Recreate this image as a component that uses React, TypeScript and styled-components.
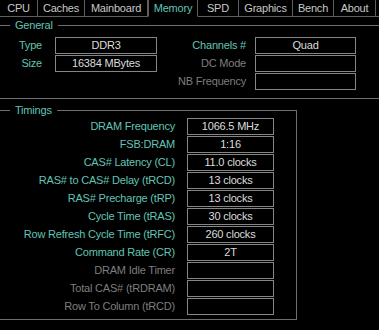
import React from 'react'
import styled, { createGlobalStyle } from 'styled-components'

const GlobalStyle = createGlobalStyle`
  html, body {
    margin: 0;
    padding: 0;
    background: #000;
  }
  body {
    font-family: "Liberation Sans", Arial, sans-serif;
  }
`

const TEAL = '#62c4b6'
const DIM = '#7e7e7e'

const Window = styled.div`
  width: 379px;
  height: 330px;
  background: #000;
  overflow: hidden;
  font-size: 11px;
  letter-spacing: -0.2px;
`

const TabBar = styled.div`
  display: flex;
  height: 17px;
`

const Tab = styled.div<{ $w: number; $active?: boolean }>`
  flex: none;
  width: ${(p) => p.$w}px;
  box-sizing: border-box;
  display: flex;
  align-items: center;
  justify-content: center;
  border-right: 1px solid #5e5e5e;
  border-left: ${(p) => (p.$active ? '1px solid #5e5e5e' : 'none')};
  border-bottom: ${(p) => (p.$active ? '1px solid #000' : '1px solid #5e5e5e')};
  color: ${(p) => (p.$active ? TEAL : '#c8c8c8')};
`

const TabFill = styled.div`
  flex: 1;
  border-bottom: 1px solid #5e5e5e;
`

const Group = styled.fieldset<{ $width?: number; $top: number; $right?: boolean }>`
  box-sizing: border-box;
  width: ${(p) => (p.$width ? `${p.$width}px` : '100%')};
  margin: ${(p) => p.$top}px 0 0;
  padding: 0;
  min-width: 0;
  border: 1px solid #6e6e6e;
  border-left: none;
  border-right: ${(p) => (p.$right ? '1px solid #6e6e6e' : 'none')};
`

const Legend = styled.legend`
  margin-left: 10px;
  padding: 0 5px;
  line-height: 13px;
  color: ${TEAL};
`

const GeneralBody = styled.div`
  display: flex;
  padding: 5px 0 8px;
`

const FieldGrid = styled.div<{ $label: number; $box: number; $gap: number }>`
  display: grid;
  grid-template-columns: ${(p) => p.$label}px ${(p) => p.$box}px;
  column-gap: ${(p) => p.$gap}px;
  row-gap: 1px;
  grid-auto-rows: 17px;
  align-content: start;
`

const Label = styled.div<{ $dim?: boolean }>`
  text-align: right;
  line-height: 17px;
  white-space: nowrap;
  color: ${(p) => (p.$dim ? DIM : TEAL)};
`

const Value = styled.div`
  box-sizing: border-box;
  height: 17px;
  border: 1px solid #858585;
  line-height: 15px;
  text-align: center;
  white-space: nowrap;
  color: #dcdcdc;
`

const TimingsBody = styled.div`
  padding: 1px 0 4px;
`

const tabs = [
  { name: 'CPU', w: 38 },
  { name: 'Caches', w: 47 },
  { name: 'Mainboard', w: 63 },
  { name: 'Memory', w: 50, active: true },
  { name: 'SPD', w: 41 },
  { name: 'Graphics', w: 54 },
  { name: 'Bench', w: 41 },
  { name: 'About', w: 42 },
]

const timings: { label: string; value: string; dim?: boolean }[] = [
  { label: 'DRAM Frequency', value: '1066.5 MHz' },
  { label: 'FSB:DRAM', value: '1:16' },
  { label: 'CAS# Latency (CL)', value: '11.0 clocks' },
  { label: 'RAS# to CAS# Delay (tRCD)', value: '13 clocks' },
  { label: 'RAS# Precharge (tRP)', value: '13 clocks' },
  { label: 'Cycle Time (tRAS)', value: '30 clocks' },
  { label: 'Row Refresh Cycle Time (tRFC)', value: '260 clocks' },
  { label: 'Command Rate (CR)', value: '2T' },
  { label: 'DRAM Idle Timer', value: '', dim: true },
  { label: 'Total CAS# (tRDRAM)', value: '', dim: true },
  { label: 'Row To Column (tRCD)', value: '', dim: true },
]

const App: React.FC = () => {
  return (
    <Window>
      <GlobalStyle />
      <TabBar>
        {tabs.map((t) => (
          <Tab key={t.name} $w={t.w} $active={t.active}>
            {t.name}
          </Tab>
        ))}
        <TabFill />
      </TabBar>

      <Group $top={2}>
        <Legend>General</Legend>
        <GeneralBody>
          <FieldGrid $label={42} $box={102} $gap={13}>
            <Label>Type</Label>
            <Value>DDR3</Value>
            <Label>Size</Label>
            <Value>16384 MBytes</Value>
          </FieldGrid>
          <FieldGrid $label={89} $box={101} $gap={9}>
            <Label>Channels #</Label>
            <Value>Quad</Value>
            <Label $dim>DC Mode</Label>
            <Value />
            <Label $dim>NB Frequency</Label>
            <Value />
          </FieldGrid>
        </GeneralBody>
      </Group>

      <Group $top={5} $width={297} $right>
        <Legend>Timings</Legend>
        <TimingsBody>
          <FieldGrid $label={175} $box={87} $gap={12}>
            {timings.map((t) => (
              <React.Fragment key={t.label}>
                <Label $dim={t.dim}>{t.label}</Label>
                <Value>{t.value}</Value>
              </React.Fragment>
            ))}
          </FieldGrid>
        </TimingsBody>
      </Group>
    </Window>
  )
}

export default App
